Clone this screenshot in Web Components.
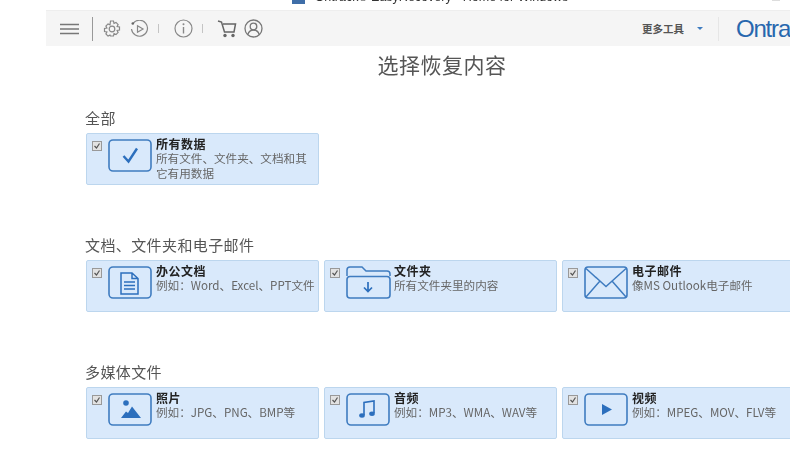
<!DOCTYPE html>
<html lang="zh">
<head>
<meta charset="utf-8">
<title>EasyRecovery</title>
<style>
html, body { margin: 0; height: 453px; overflow: hidden; background: #fff; }
body { font-family: "Liberation Sans", "Noto Sans CJK SC", sans-serif; color: #444; }
</style>
</head>
<body>

<recovery-window>
  <recovery-section label="全部">
    <recovery-card icon="check" name="所有数据">所有文件、文件夹、文档和其它有用数据</recovery-card>
  </recovery-section>
  <recovery-section label="文档、文件夹和电子邮件">
    <recovery-card icon="doc" name="办公文档">例如：Word、Excel、PPT文件</recovery-card>
    <recovery-card icon="folder" name="文件夹">所有文件夹里的内容</recovery-card>
    <recovery-card icon="mail" name="电子邮件">像MS Outlook电子邮件</recovery-card>
  </recovery-section>
  <recovery-section label="多媒体文件">
    <recovery-card icon="photo" name="照片">例如：JPG、PNG、BMP等</recovery-card>
    <recovery-card icon="music" name="音频">例如：MP3、WMA、WAV等</recovery-card>
    <recovery-card icon="video" name="视频">例如：MPEG、MOV、FLV等</recovery-card>
  </recovery-section>
</recovery-window>

<script type="text/javascript">
  const BLUE = "#3f7cc0";
  const INK = "#2c6fbd";
  const BOX = `<rect x="1" y="1" width="42" height="31" rx="4" fill="none" stroke="${BLUE}" stroke-width="1.6"/>`;

  const ICONS = {
    check: `<svg width="46" height="34" viewBox="0 0 46 34">${BOX}<path d="M15.5 17l5 5.500 8.500-13" fill="none" stroke="${INK}" stroke-width="2.400"/></svg>`,
    doc: `<svg width="46" height="34" viewBox="0 0 46 34">${BOX}<path d="M13 7h11l6 5.500v15.500h-17z M24 7v5.500h6 M16 16h11 M16 19.500h11 M16 23h11" fill="none" stroke="${INK}" stroke-width="1.500"/></svg>`,
    folder: `<svg width="46" height="34" viewBox="0 0 46 34"><path d="M1 10V4q0-3 3-3h12l4 4h21q3 0 3 3v2" fill="none" stroke="${BLUE}" stroke-width="1.500"/><rect x="1" y="10.500" width="43" height="21.500" rx="3" fill="none" stroke="${BLUE}" stroke-width="1.600"/><path d="M22 16v9 M18 21.500l4 4 4-4" fill="none" stroke="${INK}" stroke-width="1.700"/></svg>`,
    mail: `<svg width="46" height="34" viewBox="0 0 46 34"><rect x="1" y="1" width="42" height="31" rx="3" fill="none" stroke="${BLUE}" stroke-width="1.600"/><path d="M2 2.500l20 18 20-18 M2 31l14-16 M42 31L28 15" fill="none" stroke="${BLUE}" stroke-width="1.500"/></svg>`,
    photo: `<svg width="46" height="34" viewBox="0 0 46 34">${BOX}<circle cx="18" cy="10" r="2.800" fill="${INK}"/><path d="M13 25l5-6.500 2 1.500 4-6.500 9 11.500z" fill="${INK}"/></svg>`,
    music: `<svg width="46" height="34" viewBox="0 0 46 34">${BOX}<path d="M18 22V9.500l10-1.500v12" fill="none" stroke="${INK}" stroke-width="1.600"/><ellipse cx="16" cy="22.500" rx="2.800" ry="2.200" fill="${INK}"/><ellipse cx="26" cy="20.800" rx="2.800" ry="2.200" fill="${INK}"/></svg>`,
    video: `<svg width="46" height="34" viewBox="0 0 46 34">${BOX}<path d="M18 11l10 5.500-10 5.500z" fill="${INK}"/></svg>`
  };

  const windowTemplate = document.createElement('template');
  windowTemplate.innerHTML = `
    <style>
      :host { display: block; width: 790px; height: 453px; overflow: hidden; filter: blur(0.6px); }
      .caption { height: 10px; overflow: hidden; display: flex; justify-content: center; padding-left: 70px; position: relative; }
      .caption div { margin-top: -10px; display: flex; gap: 10px; align-items: center; font-size: 12.5px; line-height: 14px; color: #333; height: 14px; white-space: nowrap; }
      .caption i { display: block; width: 13px; height: 13px; background: #3f6ea8; }
      .caption u { position: absolute; left: 772px; top: 0; width: 8px; height: 1px; background: #ddd; }
      .bar { margin-left: 46px; height: 36px; background: #f5f5f5; border-top: 1px solid #eee; box-sizing: border-box; display: flex; align-items: center; overflow: hidden; white-space: nowrap; }
      .tools { display: flex; align-items: center; flex: none; width: 592px; }
      .tools svg { display: block; flex: none; }
      .sep { flex: none; width: 1px; background: #c4c4c4; height: 9px; }
      .more { flex: none; font: bold 10.5px "Noto Sans CJK SC", sans-serif; color: #555; margin-left: 4px; }
      .caret { flex: none; margin-left: 13px; width: 0; height: 0; border: 3px solid transparent; border-top: 3px solid #3f7cc0; border-bottom: 0; }
      .logo { flex: none; margin-left: 15px; padding-left: 17px; border-left: 1px solid #e6e6e6; font: 24px/24px "Liberation Sans", sans-serif; color: #2767ae; letter-spacing: -1.2px; }
      h1 { margin: 6px 0 0 0; padding-left: 94px; text-align: center; font: 400 21px/24px "Noto Sans CJK SC", sans-serif; color: #555; letter-spacing: 0.5px; }
    </style>
    <div class="caption"><div><i></i><span>Ontrack® EasyRecovery - Home for Windows</span></div><u></u></div>
    <div class="bar">
      <div class="tools">
        <svg style="margin-left:14px" width="20" height="12" viewBox="0 0 20 12"><path d="M0 1.500h19 M0 6h19 M0 10.500h19" stroke="#777" stroke-width="1.300"/></svg>
        <span class="sep" style="margin-left:12px;height:24px;background:#999"></span>
        <svg style="margin-left:10px" width="18" height="18" viewBox="0 0 18 18"><circle cx="9" cy="9" r="2.800" fill="none" stroke="#888" stroke-width="1.200"/><path d="M7.500 1h3l.5 2.300 2-.9 2.100 2.100-1 2 2.400.5v3l-2.400.5 1 2-2.100 2.100-2-1-.5 2.400h-3L7 15.100l-2 1-2.100-2.100 1-2L1.500 11.500v-3L3.900 8l-1-2L5 3.900l2 1z" fill="none" stroke="#888" stroke-width="1.200"/></svg>
        <svg style="margin-left:9px" width="19" height="18" viewBox="0 0 19 18"><path d="M3 3.500A8 8 0 1 1 1.500 9" fill="none" stroke="#888" stroke-width="1.200"/><circle cx="2.800" cy="3.500" r="1.300" fill="#666"/><path d="M7.500 5.800l5.500 3.200-5.500 3.200z" fill="none" stroke="#888" stroke-width="1.200"/></svg>
        <span class="sep" style="margin-left:9px"></span>
        <svg style="margin-left:15px" width="19" height="19" viewBox="0 0 19 19"><circle cx="9.500" cy="9.500" r="8.500" fill="none" stroke="#888" stroke-width="1.200"/><path d="M9.500 8v6.500" stroke="#888" stroke-width="1.400"/><circle cx="9.500" cy="5.200" r="1" fill="#888"/></svg>
        <span class="sep" style="margin-left:9px"></span>
        <svg style="margin-left:14px" width="20" height="18" viewBox="0 0 20 18"><path d="M1 1l3.500 1 3 10h9.500l1.500-8H6" fill="none" stroke="#666" stroke-width="1.500"/><circle cx="8" cy="15.500" r="1.700" fill="#666"/><circle cx="16" cy="15.500" r="1.700" fill="#666"/></svg>
        <svg style="margin-left:7px" width="19" height="19" viewBox="0 0 19 19"><circle cx="9.500" cy="9.500" r="8.500" fill="none" stroke="#777" stroke-width="1.300"/><circle cx="9.500" cy="7.500" r="3.300" fill="none" stroke="#777" stroke-width="1.300"/><path d="M3.800 15.500q1.500-4.500 5.700-4.500t5.700 4.500" fill="none" stroke="#777" stroke-width="1.300"/></svg>
      </div>
      <span class="more">更多工具</span><span class="caret"></span><span class="logo">Ontrack</span>
    </div>
    <h1>选择恢复内容</h1>
    <slot></slot>`;

  class RecoveryWindow extends HTMLElement {
    constructor() {
      super();
      this.attachShadow({mode: 'open'});
      this.shadowRoot.appendChild(windowTemplate.content.cloneNode(true));
    }
  }

  const sectionTemplate = document.createElement('template');
  sectionTemplate.innerHTML = `
    <style>
      :host { display: block; margin: 0 0 0 86px; height: 127px; }
      :host(:first-of-type) { margin-top: 32px; }
      .label { font: 15px/20px "Noto Sans CJK SC", sans-serif; letter-spacing: 0.4px; color: #555; margin-left: -1px; height: 25px; white-space: nowrap; }
      .row { display: flex; gap: 5px; width: 720px; }
    </style>
    <div class="label"></div>
    <div class="row"><slot></slot></div>`;

  class RecoverySection extends HTMLElement {
    constructor() {
      super();
      this.attachShadow({mode: 'open'});
      this.shadowRoot.appendChild(sectionTemplate.content.cloneNode(true));
    }
    connectedCallback() {
      this.shadowRoot.querySelector('.label').textContent = this.getAttribute('label');
    }
  }

  const cardTemplate = document.createElement('template');
  cardTemplate.innerHTML = `
    <style>
      :host { display: flex; flex: none; width: 233px; height: 52px; box-sizing: border-box; background: #d9e9fb; border: 1px solid #bcd6ee; border-radius: 2px; padding: 4px 0 0 5px; }
      .tick { flex: none; width: 10px; height: 10px; margin-top: 3px; box-sizing: border-box; border: 1px solid #999; background: #e2e2e2; position: relative; }
      .tick svg { position: absolute; left: 0; top: 0; }
      .icon { flex: none; margin-left: 6px; margin-top: 1px; height: 34px; width: 48px; }
      .text { flex: 1; min-width: 0; margin-top: -1px; font: 11.6px/14.5px "Noto Sans CJK SC", sans-serif; color: #666; }
      b { display: block; color: #222; font-size: 12px; font-weight: 700; line-height: 13px; letter-spacing: 0.5px; margin-bottom: 1px; }
    </style>
    <span class="tick"><svg width="8" height="8" viewBox="0 0 8 8"><path d="M1.500 4l2 2 3-4.500" fill="none" stroke="#555" stroke-width="1.200"/></svg></span>
    <span class="icon"></span>
    <div class="text"><b></b><slot></slot></div>`;

  class RecoveryCard extends HTMLElement {
    constructor() {
      super();
      this.attachShadow({mode: 'open'});
      this.shadowRoot.appendChild(cardTemplate.content.cloneNode(true));
    }
    connectedCallback() {
      this.shadowRoot.querySelector('.icon').innerHTML = ICONS[this.getAttribute('icon')];
      this.shadowRoot.querySelector('b').textContent = this.getAttribute('name');
    }
  }

  window.customElements.define("recovery-window", RecoveryWindow);
  window.customElements.define("recovery-section", RecoverySection);
  window.customElements.define("recovery-card", RecoveryCard);
</script>
</body>
</html>
